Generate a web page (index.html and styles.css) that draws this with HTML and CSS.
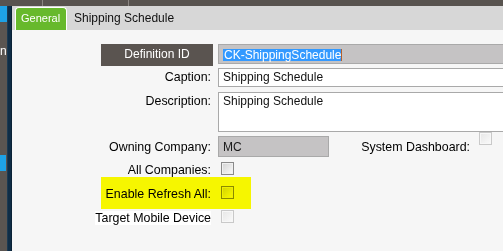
FILE: index.html
```html
<!DOCTYPE html>
<html>
<head>
<meta charset="utf-8">
<link rel="stylesheet" href="styles.css">
</head>
<body>
<div class="topbar">
  <span class="seg seg1"></span>
  <span class="seg seg2"></span>
  <span class="seg seg3"></span>
</div>
<div class="main">
  <div class="rail">
    <div class="rail-blue"></div>
    <div class="rail-text">n</div>
    <div class="rail-blue rail-blue2"></div>
  </div>
  <div class="strip"></div>
  <div class="panel">
    <div class="tabs">
      <div class="tab tab-active">General</div>
      <div class="tab">Shipping Schedule</div>
    </div>
    <div class="content">
      <div class="form">
        <div class="row row-def">
          <div class="lab"><span class="defbox">Definition ID</span></div>
          <div class="field field-ro field-def"><span class="sel">CK-ShippingSchedule</span></div>
        </div>
        <div class="row row-cap">
          <div class="lab">Caption:</div>
          <div class="field field-txt">Shipping Schedule</div>
        </div>
        <div class="row row-desc">
          <div class="lab">Description:</div>
          <div class="field field-txt field-multi">Shipping Schedule</div>
        </div>
        <div class="row row-own">
          <div class="lab lab-own">Owning Company:</div>
          <div class="owncell">
            <div class="field field-ro field-own">MC</div>
            <div class="syslab">System Dashboard:</div>
            <span class="cb cb-dis cb-sys"></span>
          </div>
        </div>
        <div class="row row-cb">
          <div class="lab lab-cb">All Companies:</div>
          <div class="cbcell"><span class="cb"></span></div>
        </div>
        <div class="row row-cb">
          <div class="lab lab-cb">Enable Refresh All:</div>
          <div class="cbcell"><span class="cb"></span></div>
        </div>
        <div class="row row-cb">
          <div class="lab lab-cb"><span class="whitebg">Target Mobile Device</span></div>
          <div class="cbcell"><span class="cb cb-dis"></span></div>
        </div>
        <div class="highlight"></div>
      </div>
    </div>
  </div>
</div>
</body>
</html>
```

FILE: styles.css
```css
* { box-sizing: border-box; }
html, body {
  margin: 0;
  padding: 0;
  width: 503px;
  height: 251px;
  overflow: hidden;
  font-family: "Liberation Sans", Arial, sans-serif;
  font-size: 12.4px;
  color: #000;
  background: #f6f6f6;
}
.topbar {
  height: 6px;
  background: #58534f;
  display: flex;
}
.seg { display: block; height: 6px; }
.seg1 { width: 42px; }
.seg2 { width: 86px; border-left: 1px solid #8b8682; }
.seg3 { flex: 1; border-left: 1px solid #8b8682; }

.main {
  display: flex;
  height: 245px;
}
.rail {
  width: 7px;
  background: #5a5551;
  display: flex;
  flex-direction: column;
}
.rail-blue {
  height: 16px;
  background: #1ea2e6;
}
.rail-text {
  margin-top: 22px;
  height: 14px;
  line-height: 14px;
  color: #fff;
  text-align: right;
  padding-right: 2px;
  overflow: hidden;
  font-size: 12px;
}
.rail-blue2 {
  margin-top: 97px;
  width: 6px;
}
.strip {
  width: 5px;
  background: #0f2d46;
  border-left: 1px solid #1c3a52;
  border-right: 1px solid #0a2236;
}
.panel {
  flex: 1;
  display: flex;
  flex-direction: column;
}
.tabs {
  height: 24px;
  background: #d7d7d7;
  display: flex;
  align-items: flex-end;
  padding-left: 3px;
}
.tab {
  height: 23px;
  line-height: 22px;
  padding: 0 7px;
  font-size: 12px;
  color: #111;
}
.tab-active {
  background: #67b92c;
  color: #fff;
  font-size: 11px;
  border: 1px solid #fff;
  border-bottom: none;
  border-radius: 4px 4px 0 0;
  padding: 0 5px;
  width: 52px;
  line-height: 21px;
}
.content {
  flex: 1;
  background: #f6f6f6;
  padding-top: 14px;
}
.form {
  position: relative;
}
.row {
  display: flex;
  gap: 5px;
}
.lab {
  width: 201px;
  flex: none;
  text-align: right;
  padding-right: 2px;
  line-height: 14px;
  padding-top: 2px;
}
.row-def { height: 22px; }
.row-def .lab { padding: 0; }
.defbox {
  display: inline-block;
  width: 112px;
  height: 22px;
  line-height: 21px;
  font-size: 12px;
  background: #5a5450;
  color: #fff;
  text-align: center;
}
.field {
  flex: 1;
  line-height: 14px;
  padding-left: 4px;
  border: 1px solid #a9a9a9;
  border-right: none;
  font-size: 12px;
}
.field-ro {
  background: #c5c3c4;
}
.field-def {
  height: 20px;
  padding-top: 4px;
  padding-left: 4px;
  line-height: 12px;
}
.sel {
  display: inline-block;
  background: #3399ff;
  color: #fff;
  height: 12px;
  line-height: 12px;
  padding-left: 1px;
  border-right: 1px solid #b4602c;
}
.row-cap { margin-top: 2px; height: 19px; }
.field-txt {
  background: #fff;
  padding-top: 1px;
  color: #111;
}
.row-desc { margin-top: 5px; height: 40px; }
.row-own { margin-top: 4px; height: 21px; }
.lab-own { padding-top: 4px; }
.owncell {
  flex: 1;
  display: flex;
}
.field-own {
  flex: none;
  width: 111px;
  height: 21px;
  border-right: 1px solid #a9a9a9;
  padding-top: 3px;
  padding-left: 4px;
  color: #1a1a1a;
}
.syslab {
  margin-left: auto;
  padding-top: 4px;
  line-height: 14px;
}
.cb-sys {
  margin: -4px 11px 0 9px;
}
.row-cb { height: 24px; }
.row-own + .row-cb { margin-top: 5px; }
.lab-cb {
  padding-top: 0;
  line-height: 16px;
}
.cbcell {
  flex: 1;
  padding-left: 3px;
}
.cb {
  display: block;
  width: 13px;
  height: 13px;
  border: 1px solid #8a8a8a;
  box-shadow: inset 0 0 0 1px #f0f0f0;
  background: linear-gradient(135deg, #d2d2d2, #fbfbfb);
}
.cb-dis {
  border-color: #c9c9c9;
  box-shadow: inset 0 0 0 1px #f7f7f7;
  background: linear-gradient(135deg, #e6e6e6, #fafafa);
}
.whitebg {
  background: #fff;
}
.highlight {
  position: absolute;
  left: 89px;
  top: 133px;
  width: 150px;
  height: 32px;
  background: #ffff00;
  mix-blend-mode: multiply;
  pointer-events: none;
}
```
